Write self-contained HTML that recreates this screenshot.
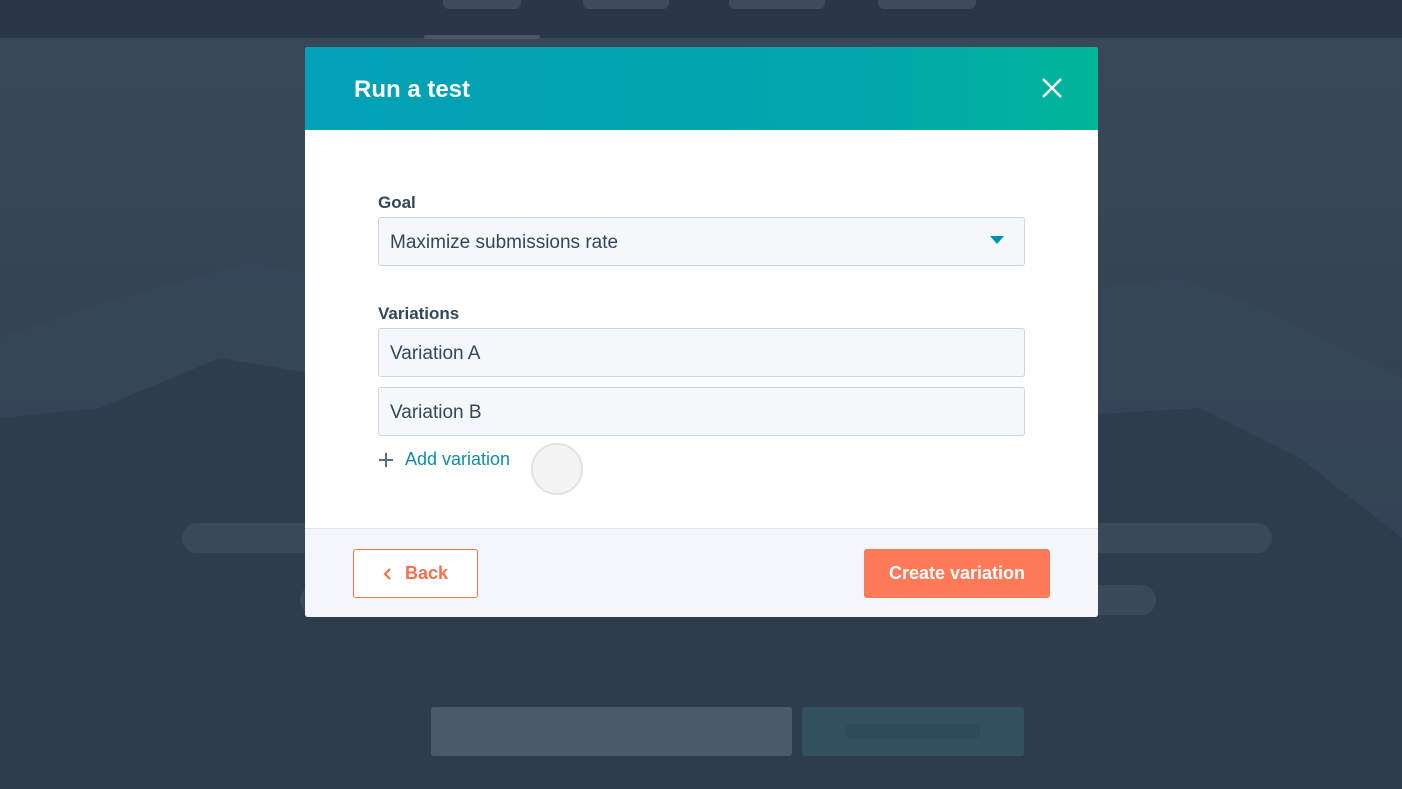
<!DOCTYPE html>
<html><head><meta charset="utf-8"><style>
*{margin:0;padding:0;box-sizing:border-box}
body{width:1402px;height:789px;overflow:hidden;background:#2c3b4b;font-family:"Liberation Sans",sans-serif;position:relative}
.abs{position:absolute}
.topbar{left:0;top:0;width:1402px;height:38px;background:#2a3748}
.pill{background:#3d4b5a;border-radius:0 0 6px 6px;top:0;height:9px}
.modal{left:305px;top:47px;width:793px;height:570px;background:#fff;border-radius:3px;overflow:hidden}
.head{left:0;top:0;width:793px;height:83px;background:linear-gradient(90deg,#01a0b6,#03a6ad 70%,#00b598)}
.title{left:49px;top:29px;color:#fff;font-size:24px;font-weight:bold}
.label{color:#33475b;font-size:17px;font-weight:bold}
.input{left:73px;width:647px;height:49px;background:#f5f8fa;border:1px solid #cbd6e2;border-radius:3px;color:#33475b;font-size:19px;padding:14px 11px 0}
.foot{left:0;top:481px;width:793px;height:89px;background:#f3f6fa;border-top:1px solid #dfe3eb}
.btn{height:49px;border-radius:3px;font-size:18px;font-weight:bold;display:flex;align-items:center;justify-content:center}
</style></head><body>
<svg class="abs" style="left:0;top:38px" width="1402" height="751">
<defs><linearGradient id="g" x1="0" y1="0" x2="0" y2="1"><stop offset="0" stop-color="#394857"/><stop offset="0.45" stop-color="#334352"/><stop offset="1" stop-color="#2a3848"/></linearGradient></defs>
<rect width="1402" height="751" fill="url(#g)"/>
<polygon points="0,300 120,260 250,225 700,300 1180,240 1260,270 1402,340 1402,751 0,751" fill="#36475a" opacity="0.7"/>
<polygon points="0,380 100,370 220,320 700,400 1200,370 1300,420 1402,500 1402,751 0,751" fill="#2d3c4b" opacity="0.85"/>
</svg>
<div class="abs topbar"></div>
<div class="abs pill" style="left:443px;width:78px"></div>
<div class="abs pill" style="left:583px;width:86px"></div>
<div class="abs pill" style="left:729px;width:96px"></div>
<div class="abs pill" style="left:878px;width:98px"></div>
<div class="abs" style="left:424px;top:35px;width:116px;height:4px;background:#4a5766;border-radius:2px"></div>
<div class="abs" style="left:182px;top:523px;width:1090px;height:30px;background:#3a4958;border-radius:15px"></div>
<div class="abs" style="left:300px;top:585px;width:856px;height:30px;background:#3a4958;border-radius:15px"></div>
<div class="abs" style="left:431px;top:707px;width:361px;height:49px;background:#4b5a69;border-radius:3px"></div>
<div class="abs" style="left:802px;top:707px;width:222px;height:49px;background:#33505f;border-radius:3px"></div>
<div class="abs" style="left:846px;top:724px;width:134px;height:14px;background:#2f4a58;border-radius:4px"></div>
<div class="abs modal">
 <div class="abs head"></div>
 <div class="abs title">Run a test</div>
 <svg class="abs" style="left:737px;top:31px" width="20" height="20"><path d="M1 1L19 19M19 1L1 19" stroke="#fff" stroke-width="2.4"/></svg>
 <div class="abs label" style="left:73px;top:146px">Goal</div>
 <div class="abs input" style="top:170px">Maximize submissions rate</div>
 <svg class="abs" style="left:685px;top:189px" width="14" height="9"><path d="M0 0H14L7 8Z" fill="#0091ae"/></svg>
 <div class="abs label" style="left:73px;top:257px">Variations</div>
 <div class="abs input" style="top:281px">Variation A</div>
 <div class="abs input" style="top:340px">Variation B</div>
 <svg class="abs" style="left:73px;top:405px" width="16" height="16"><path d="M8 1V15M1 8H15" stroke="#516f90" stroke-width="2"/></svg>
 <div class="abs" style="left:100px;top:402px;color:#0f8ea3;font-size:18px">Add variation</div>
 <div class="abs" style="left:226px;top:396px;width:52px;height:52px;border-radius:50%;background:#f4f4f4;border:2px solid #e2e2e2"></div>
 <div class="abs foot"></div>
 <div class="abs btn" style="left:48px;top:502px;width:125px;border:1.5px solid #f2714f;background:#fff;color:#f2714f"><svg width="10" height="14" style="margin-right:12px"><path d="M7 2L2 7L7 12" stroke="#f2714f" stroke-width="2.2" fill="none"/></svg>Back</div>
 <div class="abs btn" style="left:559px;top:502px;width:186px;background:#ff7a59;color:#fff">Create variation</div>
</div>
</body></html>
